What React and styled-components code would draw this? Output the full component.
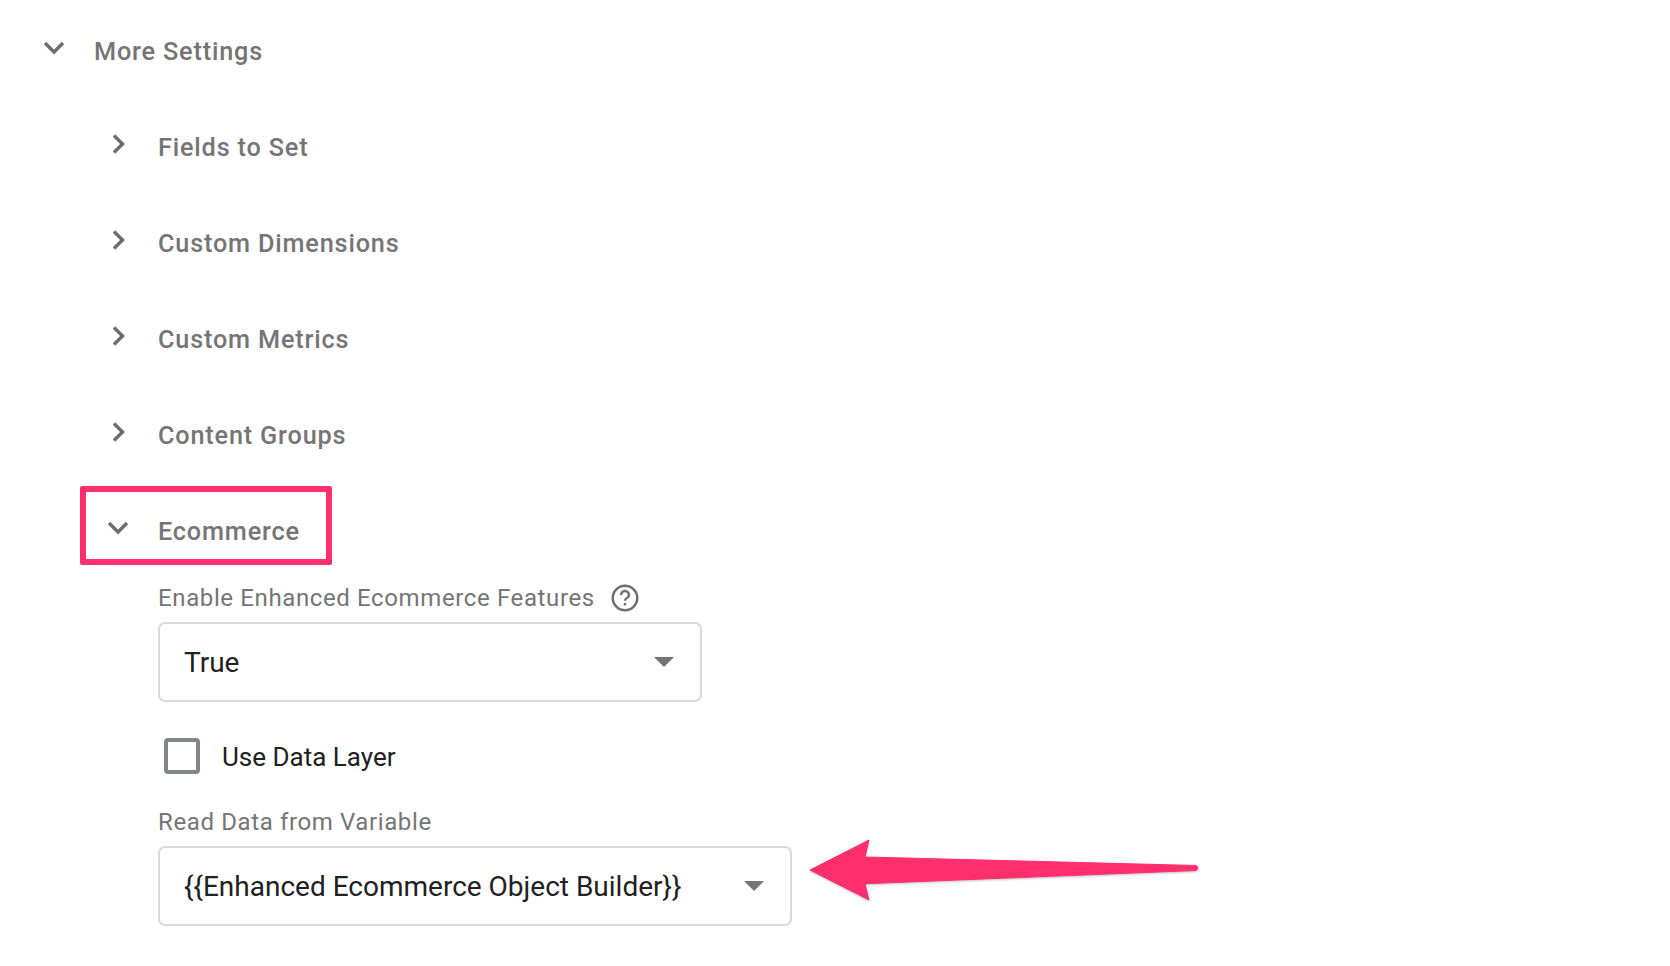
import React from 'react';
import styled, { createGlobalStyle } from 'styled-components';

const GlobalStyle = createGlobalStyle`
  html, body {
    margin: 0;
    background: #fff;
    font-family: Roboto, "Liberation Sans", sans-serif;
  }
`;

const Page = styled.div`
  padding-top: 3px;
  height: 963px;
  overflow: hidden;
`;

const Row = styled.div`
  display: flex;
  align-items: center;
  height: 96px;
  padding-left: ${p => p.$indent}px;
`;

const IconSlot = styled.span`
  display: flex;
  justify-content: center;
  align-items: center;
  width: 28px;
  height: 28px;
  margin-right: ${p => p.$gap}px;
  margin-bottom: ${p => p.$lift}px;
  color: #6e6e6e;
`;

const Title = styled.span`
  font-size: 25.25px;
  font-weight: 500;
  letter-spacing: 0.82px;
  color: #757575;
`;

const Highlight = styled.div`
  box-sizing: border-box;
  display: flex;
  align-items: center;
  width: 252px;
  height: 79px;
  margin: 3px 0 0 80px;
  padding: 12px 0 0 18px;
  border: 6px solid #ff2f6e;
  border-radius: 2px;
`;

const Fields = styled.div`
  padding: 20px 0 0 158px;
`;

const Label = styled.div`
  display: flex;
  align-items: center;
  height: 26px;
  font-size: 24px;
  letter-spacing: 0.62px;
  color: #757575;
`;

const Help = styled.svg`
  width: 28px;
  height: 28px;
  margin-left: 16px;
  color: #6e6e6e;
`;

const Select = styled.div`
  box-sizing: border-box;
  display: flex;
  align-items: center;
  justify-content: space-between;
  width: ${p => p.$width}px;
  height: ${p => p.$height}px;
  margin-top: ${p => p.$top}px;
  padding: 0 26px 0 24px;
  border: 2px solid #dadada;
  border-radius: 7px;
  font-size: 28px;
  color: #212121;
`;

const Caret = styled.span`
  width: 0;
  height: 0;
  border-left: 10px solid transparent;
  border-right: 10px solid transparent;
  border-top: 10px solid #757575;
`;

const CheckRow = styled.label`
  display: flex;
  align-items: center;
  height: 36px;
  margin: 36px 0 35px 6px;
  font-size: 26px;
  color: #212121;
`;

const CheckText = styled.span`
  padding-top: 2px;
`;

const Checkbox = styled.span`
  box-sizing: border-box;
  width: 36px;
  height: 36px;
  margin-right: 22px;
  border: 4px solid #80868b;
  border-radius: 4px;
`;

const SelectRow = styled.div`
  display: flex;
  align-items: center;
`;

const Arrow = styled.svg`
  width: 400px;
  height: 70px;
  margin: 0 0 22px 16px;
  overflow: visible;
  filter: drop-shadow(0 1px 1px rgba(0, 0, 0, 0.25));
`;

const ChevronDown = () => (
  <svg width="24" height="16" viewBox="0 0 24 16" fill="none">
    <path d="M3 3l9 9 9-9" stroke="currentColor" strokeWidth="3.4" />
  </svg>
);

const ChevronRight = () => (
  <svg width="16" height="24" viewBox="0 0 16 24" fill="none">
    <path d="M4 3.5l8.5 8.5L4 20.5" stroke="currentColor" strokeWidth="3.4" />
  </svg>
);

const collapsed = ['Fields to Set', 'Custom Dimensions', 'Custom Metrics', 'Content Groups'];

export default function App() {
  return (
    <Page>
      <GlobalStyle />
      <Row $indent={40}>
        <IconSlot $gap={26} $lift={6}><ChevronDown /></IconSlot>
        <Title>More Settings</Title>
      </Row>
      {collapsed.map(name => (
        <Row key={name} $indent={104}>
          <IconSlot $gap={26} $lift={6}><ChevronRight /></IconSlot>
          <Title>{name}</Title>
        </Row>
      ))}
      <Highlight>
        <IconSlot $gap={26} $lift={8}><ChevronDown /></IconSlot>
        <Title>Ecommerce</Title>
      </Highlight>
      <Fields>
        <Label>
          Enable Enhanced Ecommerce Features
          <Help viewBox="0 0 24 24" fill="none" stroke="currentColor" strokeWidth="2.1">
            <circle cx="12" cy="12" r="10.5" />
            <path d="M8.6 9.4a3.4 3.4 0 0 1 6.8 0c0 2.4-3.4 2.6-3.4 5" />
            <path d="M12 16.2v2.2" />
          </Help>
        </Label>
        <Select $width={544} $height={80} $top={11}>
          True
          <Caret />
        </Select>
        <CheckRow>
          <Checkbox />
          <CheckText>Use Data Layer</CheckText>
        </CheckRow>
        <Label>Read Data from Variable</Label>
        <SelectRow>
          <Select $width={634} $height={80} $top={10}>
            {'{{Enhanced Ecommerce Object Builder}}'}
            <Caret />
          </Select>
          <Arrow viewBox="0 0 400 70" aria-hidden="true">
            <path
              d="M2 35 L61 5 L57 22 L388 30.5 Q392 33 388 35.5 L57 48.7 L61 65 Z"
              fill="#ff2f6e"
              stroke="#ff2f6e"
              strokeWidth="1"
              strokeLinejoin="round"
            />
          </Arrow>
        </SelectRow>
      </Fields>
    </Page>
  );
}
